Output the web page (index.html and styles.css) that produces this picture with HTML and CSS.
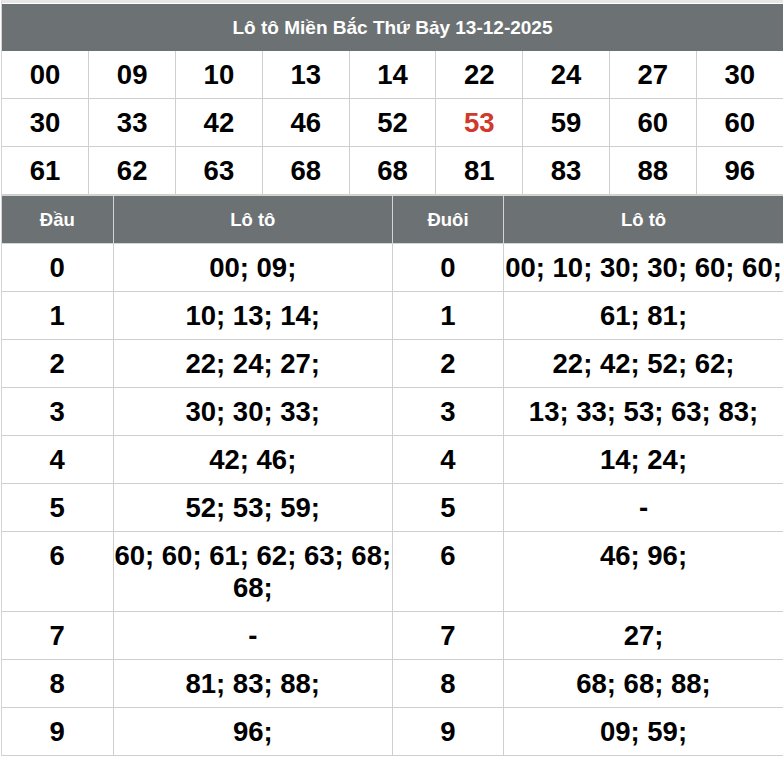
FILE: index.html
```html
<!DOCTYPE html>
<html lang="vi">
<head>
<meta charset="utf-8">
<title>Lô tô Miền Bắc</title>
<link rel="stylesheet" href="styles.css">
</head>
<body>
<div class="wrap">
  <div class="title">Lô tô Miền Bắc Thứ Bảy 13-12-2025</div>
  <table class="grid">
    <tr><td>00</td><td>09</td><td>10</td><td>13</td><td>14</td><td>22</td><td>24</td><td>27</td><td>30</td></tr>
    <tr><td>30</td><td>33</td><td>42</td><td>46</td><td>52</td><td class="hot">53</td><td>59</td><td>60</td><td>60</td></tr>
    <tr><td>61</td><td>62</td><td>63</td><td>68</td><td>68</td><td>81</td><td>83</td><td>88</td><td>96</td></tr>
  </table>
  <table class="dd">
    <colgroup><col class="c-k"><col class="c-v"><col class="c-k"><col class="c-v"></colgroup>
    <tr><th>Đầu</th><th>Lô tô</th><th>Đuôi</th><th>Lô tô</th></tr>
    <tr><td>0</td><td>00; 09;</td><td>0</td><td>00; 10; 30; 30; 60; 60;</td></tr>
    <tr><td>1</td><td>10; 13; 14;</td><td>1</td><td>61; 81;</td></tr>
    <tr><td>2</td><td>22; 24; 27;</td><td>2</td><td>22; 42; 52; 62;</td></tr>
    <tr><td>3</td><td>30; 30; 33;</td><td>3</td><td>13; 33; 53; 63; 83;</td></tr>
    <tr><td>4</td><td>42; 46;</td><td>4</td><td>14; 24;</td></tr>
    <tr><td>5</td><td>52; 53; 59;</td><td>5</td><td>-</td></tr>
    <tr><td>6</td><td>60; 60; 61; 62; 63; 68; 68;</td><td>6</td><td>46; 96;</td></tr>
    <tr><td>7</td><td>-</td><td>7</td><td>27;</td></tr>
    <tr><td>8</td><td>81; 83; 88;</td><td>8</td><td>68; 68; 88;</td></tr>
    <tr><td>9</td><td>96;</td><td>9</td><td>09; 59;</td></tr>
  </table>
</div>
</body>
</html>
```
FILE: styles.css
```css
html, body {
  margin: 0;
  padding: 0;
  background: #fff;
}
body {
  font-family: "Liberation Sans", Arial, sans-serif;
  color: #000;
}
.wrap {
  width: 781px;
  margin: 0 1px;
  border-top: 3px solid #e6e6e6;
  border-left: 1px solid #d4d4d4;
  border-right: 1px solid #d4d4d4;
  box-sizing: content-box;
}
.title {
  background: #6c7273;
  color: #fff;
  font-weight: bold;
  font-size: 19px;
  text-align: center;
  height: 47px;
  line-height: 47px;
  margin-top: 1px;
}
table {
  width: 100%;
  border-collapse: collapse;
  table-layout: fixed;
}
td, th {
  border: 1px solid #cfcfcf;
  text-align: center;
  font-weight: bold;
  padding: 0;
}
.grid td {
  font-size: 27.5px;
  height: 47px;
  line-height: 32px;
}
.grid tr:first-child td { border-top: 0; }
.grid tr td:first-child, .dd tr > :first-child { border-left: 0; }
.grid tr td:last-child, .dd tr > :last-child { border-right: 0; }
.hot { color: #d0392b; }
.c-k { width: 111px; }
.c-v { width: auto; }
.dd th {
  background: #6c7273;
  color: #fff;
  font-size: 18.5px;
  height: 47px;
  border-color: #d4d4d4;
}
.dd td {
  font-size: 27.5px;
  line-height: 32px;
  padding: 8px 0 7px;
  vertical-align: top;
}
```
